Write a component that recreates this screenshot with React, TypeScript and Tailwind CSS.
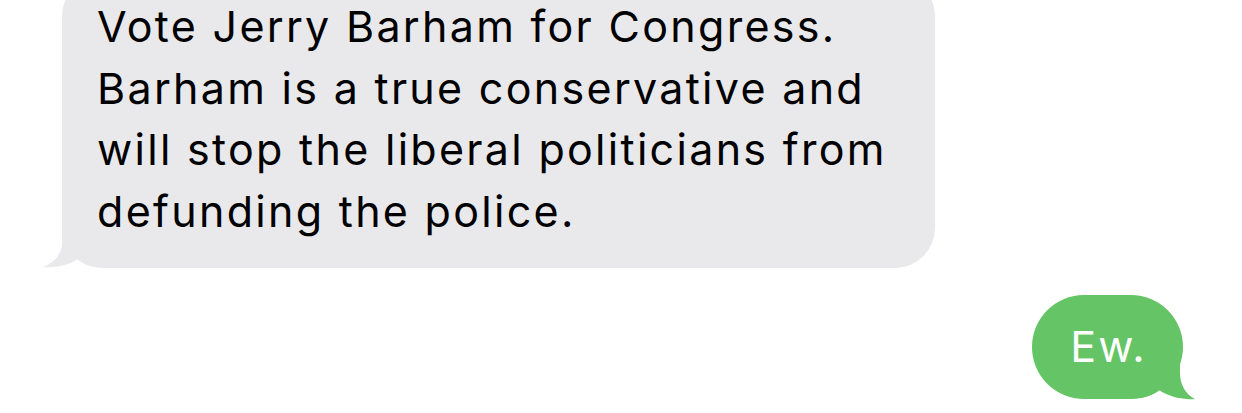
export default function App() {
  return (
    <div className="w-[1242px] h-[413px] overflow-hidden bg-white flex flex-col font-['Inter','Liberation_Sans',sans-serif]">
      {/* received bubble */}
      <div className="relative ml-[62px] mt-[-24px] w-[873px]">
        <svg
          className="absolute left-[-22px] bottom-0"
          width="70"
          height="50"
          viewBox="0 0 70 50"
        >
          <path
            d="M22 0 L22 25 C22 36 14 45 3 49 C14 50 30 47 38 41 C46 47 56 50 70 50 L70 0 Z"
            fill="#e9e9eb"
          />
        </svg>
        <div className="relative rounded-[40px] bg-[#e9e9eb] pl-[35px] pr-[20px] pt-[20px] pb-[25px] text-[43px] leading-[61.67px] text-black tracking-[2.3px]">
          Vote Jerry Barham for Congress.
          <br />
          Barham is a true conservative and
          <br />
          will stop the liberal politicians from
          <br />
          defunding the police.
        </div>
      </div>

      {/* sent bubble */}
      <div className="relative self-end mr-[59px] mt-[27px]">
        <svg
          className="absolute right-[-16px] bottom-[-1px]"
          width="62"
          height="50"
          viewBox="0 0 62 50"
        >
          <path
            d="M43 0 L43 23 C43 34 48 44 58 49 C47 50 32 47 22 40 C16 45 8 48 0 48 L0 0 Z"
            fill="#65c466"
          />
        </svg>
        <div className="relative w-[151px] h-[104px] rounded-[52px] bg-[#65c466] flex items-center justify-center pl-[2px] text-white text-[43px] tracking-[2px]">
          Ew.
        </div>
      </div>
    </div>
  );
}
